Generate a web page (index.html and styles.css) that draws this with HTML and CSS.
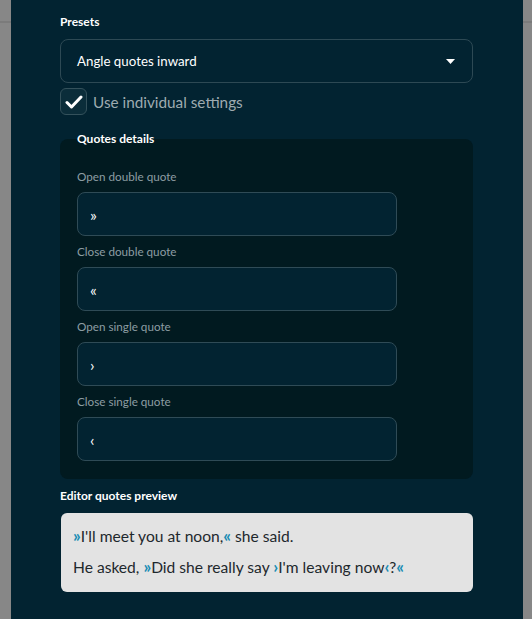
FILE: index.html
```html
<!DOCTYPE html>
<html lang="en">
<head>
    <meta charset="UTF-8">
    <title>Quotes settings</title>
    <link rel="stylesheet" href="styles.css">
</head>
<body>
    <div class="modal">
        <div class="label">Presets</div>
        <div class="select">
            <span>Angle quotes inward</span>
            <svg class="caret" width="9" height="5" viewBox="0 0 9 5"><path d="M0 0h9L4.5 5z" fill="#fff"/></svg>
        </div>

        <label class="check-row">
            <span class="checkbox">
                <svg width="18" height="14" viewBox="0 0 18 14"><path d="M2 7.5l4.5 4.5L16 2" fill="none" stroke="#fff" stroke-width="3" stroke-linecap="round" stroke-linejoin="round"/></svg>
            </span>
            <span>Use individual settings</span>
        </label>

        <!-- 引号详情 -->
        <fieldset class="details">
            <legend>Quotes details</legend>
            <div class="field">
                <div class="field-label">Open double quote</div>
                <div class="input">&raquo;</div>
            </div>
            <div class="field">
                <div class="field-label">Close double quote</div>
                <div class="input">&laquo;</div>
            </div>
            <div class="field">
                <div class="field-label">Open single quote</div>
                <div class="input">&rsaquo;</div>
            </div>
            <div class="field">
                <div class="field-label">Close single quote</div>
                <div class="input">&lsaquo;</div>
            </div>
        </fieldset>

        <div class="label preview-label">Editor quotes preview</div>
        <div class="preview">
            <p><span class="q">&raquo;</span>I'll meet you at noon,<span class="q">&laquo;</span> she said.</p>
            <p>He asked, <span class="q">&raquo;</span>Did she really say <span class="q">&rsaquo;</span>I'm leaving now<span class="q">&lsaquo;</span>?<span class="q">&laquo;</span></p>
        </div>
    </div>
</body>
</html>
```

FILE: styles.css
```css
* {
    margin: 0;
    padding: 0;
    box-sizing: border-box;
}

body {
    font-family: Lato, "Open Sans", sans-serif;
    background: linear-gradient(to bottom, transparent 21px, #7b7b7b 21px, #7b7b7b 23px, transparent 23px), #878787;
    padding-left: 11px;
    height: 619px;
    overflow: hidden;
}

.modal {
    width: 512px;
    min-height: 619px;
    background: #022331;
    padding: 14px 50px 0 49px;
}

.label {
    font-size: 12px;
    font-weight: 700;
    line-height: 16px;
    color: #fff;
}

/* 下拉框 */
.select {
    margin-top: 9px;
    height: 44px;
    border: 1px solid #2d4954;
    border-radius: 8px;
    padding: 0 17px 0 16px;
    display: flex;
    align-items: center;
    justify-content: space-between;
    color: #fff;
    font-size: 13.3px;
}

.check-row {
    margin-top: 5px;
    display: flex;
    align-items: center;
    gap: 6px;
    font-size: 15.3px;
    color: #9eabb0;
    height: 27px;
}

.checkbox {
    width: 27px;
    height: 27px;
    border: 1px solid #34515b;
    border-radius: 6px;
    background: #0b2d3a;
    display: flex;
    align-items: center;
    justify-content: center;
}

/* 引号详情 */
.details {
    margin-top: 16px;
    border: 0;
    border-radius: 8px;
    background: #011a20;
    padding: 0 17px 18px;
}

.details legend {
    font-size: 12px;
    font-weight: 700;
    line-height: 16px;
    color: #fff;
    padding: 0;
}

.field {
    margin-top: 8px;
}

.field:first-of-type {
    margin-top: 22px;
}

.field-label {
    font-size: 11.7px;
    line-height: 15px;
    color: #8d9da3;
}

.input {
    margin-top: 8px;
    width: 320px;
    height: 44px;
    border: 1px solid #2f4b56;
    border-radius: 8px;
    background: #022331;
    padding-left: 12px;
    display: flex;
    align-items: center;
    color: #fff;
    font-size: 16px;
}

.preview-label {
    margin-top: 9px;
}

.preview {
    margin-top: 9px;
    margin-left: 1px;
    background: #e3e3e3;
    border-radius: 6px;
    padding: 8px 12px 9px;
    color: #1e282d;
    font-size: 15.6px;
    line-height: 31px;
}

.q {
    color: #1a8db4;
    font-size: 17px;
    font-weight: 700;
    line-height: 0;
}
```
